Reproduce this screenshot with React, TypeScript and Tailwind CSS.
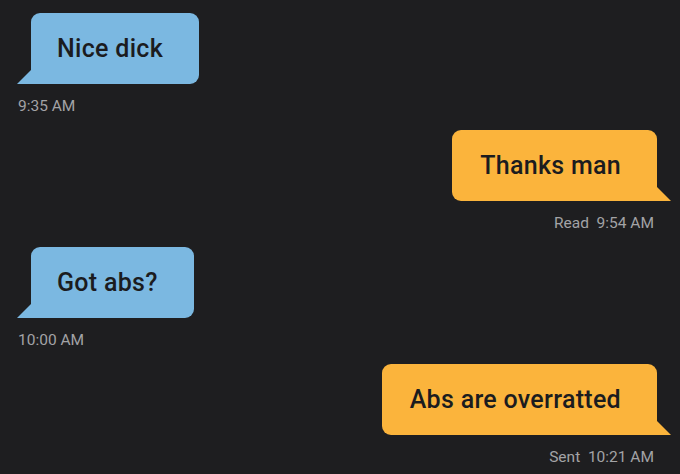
import React from "react";

type Message = {
  text: string;
  time: string;
  mine: boolean;
};

const messages: Message[] = [
  { text: "Nice dick", time: "9:35 AM", mine: false },
  { text: "Thanks man", time: "Read  9:54 AM", mine: true },
  { text: "Got abs?", time: "10:00 AM", mine: false },
  { text: "Abs are overratted", time: "Sent  10:21 AM", mine: true },
];

function Bubble({ msg }: { msg: Message }) {
  const color = msg.mine ? "bg-[#fbb43c]" : "bg-[#7bb8e1]";
  return (
    <div
      className={`relative h-[71px] flex items-center rounded-[9px] ${color} ${
        msg.mine ? "rounded-br-none pl-[28px] pr-[36px]" : "rounded-bl-none pl-[26px] pr-[36px]"
      }`}
    >
      <span className="text-[25px] font-medium text-[#1b1c1f] tracking-[0.3px]">{msg.text}</span>
      {/* tail in the bottom corner */}
      {msg.mine ? (
        <svg className="absolute bottom-0 right-[-14px]" width="14" height="14" viewBox="0 0 14 14">
          <polygon points="0,0 14,14 0,14" fill="#fbb43c" />
        </svg>
      ) : (
        <svg className="absolute bottom-0 left-[-14px]" width="14" height="14" viewBox="0 0 14 14">
          <polygon points="14,0 14,14 0,14" fill="#7bb8e1" />
        </svg>
      )}
    </div>
  );
}

export default function App() {
  return (
    <div className="w-[680px] h-[474px] overflow-hidden bg-[#1e1e20] pt-[13px] font-['Roboto',sans-serif]">
      {messages.map((msg, i) => (
        <div
          key={i}
          className={`flex flex-col mb-[14px] ${
            msg.mine ? "items-end pr-[23px]" : "items-start pl-[31px]"
          }`}
        >
          <Bubble msg={msg} />
          <div
            className={`mt-[12px] text-[15.5px] leading-[20px] text-[#a3a3a6] whitespace-pre ${
              msg.mine ? "mr-[3px]" : "ml-[-13px]"
            }`}
          >
            {msg.time}
          </div>
        </div>
      ))}
    </div>
  );
}
